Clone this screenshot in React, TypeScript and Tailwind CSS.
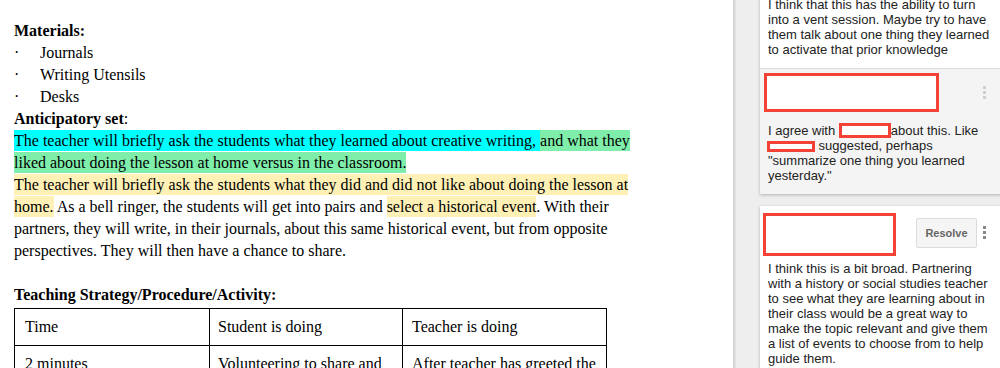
import React from 'react'

const serif = { fontFamily: '"Liberation Serif", "Times New Roman", serif' }

function RedBox({ className }: { className: string }) {
  return <span className={`inline-block border-[3px] border-[#f44336] bg-white align-middle ${className}`} />
}

function Dots({ light }: { light?: boolean }) {
  const c = light ? 'bg-[#cfcfcf]' : 'bg-[#8a8a8a]'
  return (
    <div className="flex flex-col gap-[2px] px-[4px]">
      <span className={`w-[3px] h-[3px] ${c}`} />
      <span className={`w-[3px] h-[3px] ${c}`} />
      <span className={`w-[3px] h-[3px] ${c}`} />
    </div>
  )
}

export default function App() {
  const hl = 'py-[2px] [box-decoration-break:clone]'
  return (
    <div className="flex w-[1000px] h-[368px] overflow-hidden bg-white">
      {/* Document */}
      <div className="w-[733px] shrink-0 pl-[14px] pt-[20px] text-[16px] leading-[22px] text-black" style={serif}>
        <div className="w-[622px]">
          <p className="font-bold">Materials:</p>
          {['Journals', 'Writing Utensils', 'Desks'].map((m) => (
            <p key={m} className="flex">
              <span className="w-[26px]">·</span>
              <span>{m}</span>
            </p>
          ))}
          <p>
            <span className="font-bold">Anticipatory set</span>:
          </p>
          <p>
            <span className={`bg-[#00ffff] ${hl}`}>
              The teacher will briefly ask the students what they learned about creative writing,{' '}
            </span>
            <span className={`bg-[#80eeab] ${hl}`}>
              and what they liked about doing the lesson at home versus in the classroom.
            </span>
          </p>
          <p>
            <span className={`bg-[#fff0b6] ${hl}`}>
              The teacher will briefly ask the students what they did and did not like about doing the lesson at home.
            </span>{' '}
            As a bell ringer, the students will get into pairs and{' '}
            <span className={`bg-[#fff0b6] ${hl}`}>select a historical event</span>. With their partners, they
            will write, in their journals, about this same historical event, but from opposite perspectives. They
            will then have a chance to share.
          </p>
          <p>&nbsp;</p>
          <p className="font-bold">Teaching Strategy/Procedure/Activity:</p>
          <table className="mt-[2px] w-[593px] border-collapse">
            <tbody>
              <tr className="h-[37px]">
                <td className="w-[195px] border border-black pl-[10px] align-middle">Time</td>
                <td className="w-[193px] border border-black pl-[8px] align-middle">Student is doing</td>
                <td className="border border-black pl-[9px] align-middle">Teacher is doing</td>
              </tr>
              <tr className="h-[37px]">
                <td className="border border-black pl-[10px] align-middle">2 minutes</td>
                <td className="border border-black pl-[8px] align-middle">Volunteering to share and</td>
                <td className="border border-black pl-[9px] align-middle">After teacher has greeted the</td>
              </tr>
            </tbody>
          </table>
        </div>
      </div>

      {/* Divider shadow */}
      <div className="w-[3px] shrink-0 bg-gradient-to-r from-[#d0d0d0] to-[#e4e4e4]" />

      {/* Comments sidebar */}
      <div
        className="flex-1 bg-[#eeeeee] pl-[24px] overflow-hidden text-[13px] leading-[15px] text-[#222]"
        style={{ fontFamily: '"Liberation Sans", Arial, sans-serif' }}
      >
        <div className="w-[260px] shadow-[0_1px_3px_rgba(0,0,0,0.25)]">
          <div className="bg-white pl-[8px] pb-[11px] -mt-[3px] border-b border-[#dcdcdc]">
            <div className="w-[224px]">
              I think that this has the ability to turn into a vent session. Maybe try to have them talk about one
              thing they learned to activate that prior knowledge
            </div>
          </div>
          <div className="bg-[#f4f4f4] pt-[4px] pb-[11px]">
            <div className="flex items-start justify-between pl-[4px] pr-[30px]">
              <RedBox className="w-[175px] h-[39px]" />
              <div className="mt-[13px]">
                <Dots light />
              </div>
            </div>
            <div className="pl-[8px] pr-[16px] mt-[11px]">
              I agree with <RedBox className="w-[52px] h-[15px] -mt-[2px]" />
              about this. Like <RedBox className="w-[48px] h-[11px] -ml-[1px]" /> suggested, perhaps "summarize
              one thing you learned yesterday."
            </div>
          </div>
        </div>

        <div className="mt-[12px] w-[260px] bg-white shadow-[0_1px_3px_rgba(0,0,0,0.25)] pt-[7px] pb-[10px]">
          <div className="flex items-start pl-[3px] pr-[16px]">
            <RedBox className="w-[133px] h-[43px]" />
            <button className="ml-[20px] mt-[5px] w-[61px] h-[30px] rounded-[2px] border border-[#dcdcdc] bg-[#f5f5f5] text-[11px] font-bold text-[#666]">
              Resolve
            </button>
            <div className="mt-[13px] ml-[2px]">
              <Dots />
            </div>
          </div>
          <div className="pl-[8px] pr-[24px] mt-[5px]">
            I think this is a bit broad. Partnering with a history or social studies teacher to see what they are
            learning about in their class would be a great way to make the topic relevant and give them a list of
            events to choose from to help guide them.
          </div>
        </div>
      </div>
    </div>
  )
}
